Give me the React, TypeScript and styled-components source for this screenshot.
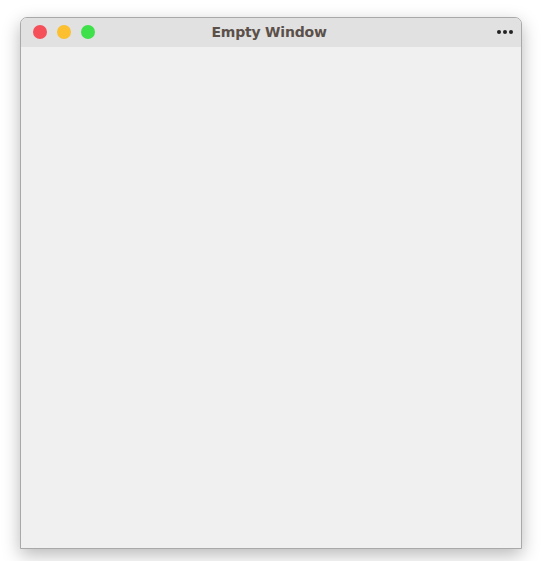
import React from "react";
import styled, { createGlobalStyle } from "styled-components";

const GlobalStyle = createGlobalStyle`
  html, body {
    margin: 0;
    padding: 0;
    background: #ffffff;
  }
`;

const Page = styled.div`
  padding: 17px 0 0 20px;
  width: 548px;
  height: 561px;
  box-sizing: border-box;
`;

const Window = styled.div`
  width: 502px;
  height: 532px;
  box-sizing: border-box;
  border: 1px solid #a9a9a9;
  border-radius: 7px 7px 0 0;
  background: #f0f0f0;
  box-shadow: 0 6px 18px rgba(0, 0, 0, 0.28);
  display: flex;
  flex-direction: column;
  overflow: hidden;
`;

const TitleBar = styled.div`
  height: 29px;
  box-sizing: border-box;
  flex: none;
  background: #e1e1e1;
  display: grid;
  grid-template-columns: 1fr auto 1fr;
  align-items: center;
  padding: 0 8px 1px 12px;
`;

const Lights = styled.div`
  display: flex;
  gap: 10px;
`;

const Light = styled.span<{ $color: string }>`
  width: 14px;
  height: 14px;
  border-radius: 50%;
  background: ${(p) => p.$color};
`;

const Title = styled.div`
  font-family: "DejaVu Sans", "Verdana", sans-serif;
  font-weight: bold;
  font-size: 14px;
  color: #5b504a;
  letter-spacing: -0.2px;
  margin-right: 8px;
`;

const Menu = styled.div`
  justify-self: end;
  display: flex;
  gap: 2px;
`;

const Dot = styled.span`
  width: 4px;
  height: 4px;
  border-radius: 50%;
  background: #222;
`;

const Body = styled.div`
  flex: 1;
  background: #f0f0f0;
`;

export default function App() {
  return (
    <>
      <GlobalStyle />
      <Page>
        <Window>
          <TitleBar>
            <Lights>
              <Light $color="#f5505a" />
              <Light $color="#fbbf30" />
              <Light $color="#3fe14b" />
            </Lights>
            <Title>Empty Window</Title>
            <Menu>
              <Dot />
              <Dot />
              <Dot />
            </Menu>
          </TitleBar>
          <Body />
        </Window>
      </Page>
    </>
  );
}
